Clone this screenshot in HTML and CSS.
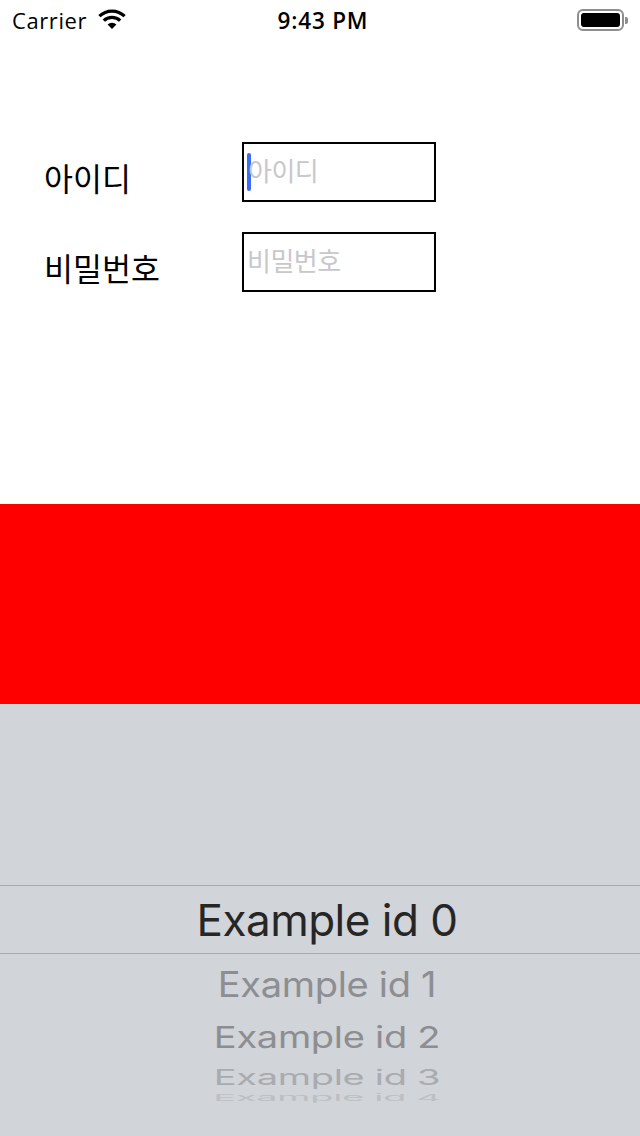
FILE: index.html
```html
<!DOCTYPE html>
<html lang="ko">
<head>
<meta charset="utf-8">
<link rel="stylesheet" href="styles.css">
</head>
<body>
<div class="screen">
  <div class="status">
    <div class="status-left">
      <span class="carrier">Carrier</span>
      <svg class="wifi" width="30" height="22" viewBox="0 0 30 22">
        <path d="M15 21 L10.6 16.4 A6.5 6.5 0 0 1 19.4 16.4 Z" fill="#000"/>
        <path d="M6.8 12.6 A11.8 11.8 0 0 1 23.2 12.6" fill="none" stroke="#000" stroke-width="3.2" stroke-linecap="butt"/>
        <path d="M2.4 8.2 A18 18 0 0 1 27.6 8.2" fill="none" stroke="#000" stroke-width="3.2" stroke-linecap="butt"/>
      </svg>
    </div>
    <div class="time">9:43 PM</div>
    <div class="status-right">
      <div class="battery"><div class="battery-fill"></div></div>
      <div class="battery-tip"></div>
    </div>
  </div>

  <div class="form">
    <div class="row">
      <div class="label">아이디</div>
      <div class="field"><span class="caret"></span><span class="placeholder">아이디</span></div>
    </div>
    <div class="row">
      <div class="label">비밀번호</div>
      <div class="field"><span class="placeholder">비밀번호</span></div>
    </div>
  </div>

  <div class="red"></div>

  <div class="picker">
    <div class="selected">Example id 0</div>
    <div class="item item1">Example id 1</div>
    <div class="item item2">Example id 2</div>
    <div class="item item3">Example id 3</div>
    <div class="item item4">Example id 4</div>
  </div>
</div>
</body>
</html>
```
FILE: styles.css
```css
html, body {
  margin: 0;
  padding: 0;
  background: #fff;
}
.screen {
  width: 640px;
  height: 1136px;
  display: flex;
  flex-direction: column;
  overflow: hidden;
  font-family: "Liberation Sans", Arial, sans-serif;
}
.status {
  height: 40px;
  display: flex;
  align-items: center;
  justify-content: space-between;
  padding: 0 12px 0 12px;
  box-sizing: border-box;
  font-family: "Open Sans", "Liberation Sans", sans-serif;
}
.status-left {
  display: flex;
  align-items: center;
  gap: 10px;
  width: 200px;
}
.carrier {
  font-size: 22px;
  letter-spacing: 0.6px;
  color: #000;
}
.wifi {
  margin-top: -2px;
}
.time {
  font-size: 22.5px;
  font-weight: 600;
  letter-spacing: 0.8px;
  color: #000;
  margin-left: 6px;
}
.status-right {
  width: 200px;
  display: flex;
  justify-content: flex-end;
  align-items: center;
}
.battery {
  width: 39px;
  height: 14px;
  border: 2px solid #8e8e8e;
  border-radius: 6px;
  padding: 2px;
  box-sizing: content-box;
  display: flex;
}
.battery-fill {
  flex: 1;
  background: #000;
  border-radius: 3px;
}
.battery-tip {
  width: 3px;
  height: 7px;
  background: #8e8e8e;
  border-radius: 0 2px 2px 0;
  margin-left: 1px;
}
.form {
  padding: 102px 0 0 44px;
  display: flex;
  flex-direction: column;
  gap: 30px;
  height: 464px;
  box-sizing: border-box;
}
.row {
  display: flex;
  align-items: center;
  height: 60px;
}
.label {
  width: 198px;
  font-family: "Noto Sans CJK KR", sans-serif;
  font-size: 31.5px;
  color: #000;
  line-height: 1;
  padding-top: 12px;
}
.field {
  width: 194px;
  height: 60px;
  border: 2px solid #000;
  box-sizing: border-box;
  display: flex;
  align-items: center;
  padding-left: 3px;
  padding-bottom: 4px;
}
.caret {
  width: 4px;
  height: 38px;
  background: #3a6cf5;
  border-radius: 2px;
  margin-right: -3px;
  margin-top: 4px;
}
.placeholder {
  font-family: "Noto Sans CJK KR", sans-serif;
  font-size: 26px;
  color: #c7c7cc;
  line-height: 1;
  letter-spacing: -0.5px;
}
.red {
  height: 200px;
  background: #ff0000;
}
.picker {
  flex: 1;
  background: #d1d4d9;
  display: flex;
  flex-direction: column;
  align-items: center;
  padding-top: 181px;
  padding-left: 14px;
  font-family: Inter, "Liberation Sans", sans-serif;
}
.selected {
  align-self: stretch;
  margin-left: -14px;
  padding-left: 14px;
  height: 69px;
  border-top: 1px solid #a8aaae;
  border-bottom: 1px solid #a8aaae;
  box-sizing: border-box;
  display: flex;
  align-items: center;
  justify-content: center;
  font-size: 44px;
  color: #262626;
  letter-spacing: -0.5px;
}
.item {
  font-size: 38px;
  color: #8d8e92;
  line-height: 1;
  letter-spacing: -0.3px;
}
.item1 {
  margin-top: 11px;
  transform: scaleY(0.92);
}
.item2 {
  margin-top: 15px;
  transform: scaleY(0.78);
}
.item3 {
  margin-top: 2px;
  color: #a9abaf;
  transform: scaleY(0.55);
}
.item4 {
  margin-top: -18px;
  color: #bdbfc3;
  transform: scaleY(0.25);
}
```
